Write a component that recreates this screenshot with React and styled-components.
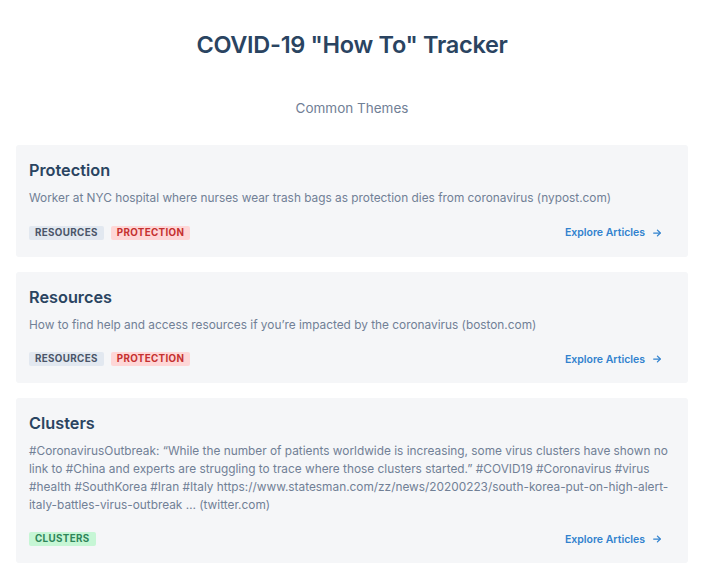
import React from 'react';
import styled, { createGlobalStyle } from 'styled-components';

const GlobalStyle = createGlobalStyle`
  body {
    margin: 0;
    background: #ffffff;
    font-family: Inter, "Noto Sans", "Liberation Sans", sans-serif;
    -webkit-font-smoothing: antialiased;
  }
`;

const Page = styled.div`
  width: 672px;
  margin: 0 auto;
  padding-top: 30px;
`;

const Heading = styled.h1`
  margin: 0;
  text-align: center;
  font-size: 23.5px;
  line-height: 29px;
  font-weight: 600;
  color: #2a4461;
  letter-spacing: -0.3px;
`;

const Subheading = styled.h2`
  margin: 0;
  padding-top: 40px;
  text-align: center;
  font-size: 13.5px;
  line-height: 18px;
  font-weight: 400;
  color: #718096;
`;

const List = styled.div`
  display: flex;
  flex-direction: column;
  gap: 15px;
  margin-top: 28px;
`;

const Card = styled.section`
  background: #f5f6f8;
  border-radius: 3px;
  padding: 13px 15px 17px 13px;
`;

const CardTitle = styled.h3`
  margin: 0;
  font-size: 16.3px;
  line-height: 24px;
  font-weight: 600;
  color: #2a4461;
`;

const CardBody = styled.p`
  margin: 8px 0 0;
  font-size: 11.85px;
  line-height: 17.7px;
  color: #718096;
`;

const Footer = styled.div`
  display: flex;
  align-items: center;
  justify-content: space-between;
  margin-top: 18px;
  padding-right: 11px;
`;

const Tags = styled.div`
  display: flex;
  gap: 7px;
`;

const tagColors = {
  gray: { bg: '#e2e8f0', fg: '#4a5568' },
  red: { bg: '#fed7d7', fg: '#c53030' },
  green: { bg: '#c6f6d5', fg: '#2f855a' },
};

const Tag = styled.span`
  display: inline-block;
  height: 14px;
  line-height: 14px;
  padding: 0 6px;
  border-radius: 2px;
  font-size: 9.8px;
  font-weight: 700;
  letter-spacing: 0.35px;
  text-transform: uppercase;
  background: ${p => tagColors[p.$color].bg};
  color: ${p => tagColors[p.$color].fg};
`;

const ExploreLink = styled.a`
  display: flex;
  align-items: center;
  gap: 7px;
  font-size: 10.5px;
  font-weight: 600;
  color: #3182ce;
  text-decoration: none;
  cursor: pointer;
`;

const Arrow = () => (
  <svg width="10" height="10" viewBox="0 0 24 24" fill="none" stroke="#3182ce" strokeWidth="3" strokeLinecap="round" strokeLinejoin="round">
    <path d="M4 12h15" />
    <path d="M13 5l7 7-7 7" />
  </svg>
);

const themes = [
  {
    title: 'Protection',
    body: 'Worker at NYC hospital where nurses wear trash bags as protection dies from coronavirus (nypost.com)',
    tags: [['Resources', 'gray'], ['Protection', 'red']],
  },
  {
    title: 'Resources',
    body: 'How to find help and access resources if you\u2019re impacted by the coronavirus (boston.com)',
    tags: [['Resources', 'gray'], ['Protection', 'red']],
  },
  {
    title: 'Clusters',
    body: '#CoronavirusOutbreak: \u201cWhile the number of patients worldwide is increasing, some virus clusters have shown no link to #China and experts are struggling to trace where those clusters started.\u201d #COVID19 #Coronavirus #virus #health #SouthKorea #Iran #Italy https://www.statesman.com/zz/news/20200223/south-korea-put-on-high-alert-italy-battles-virus-outbreak \u2026 (twitter.com)',
    tags: [['Clusters', 'green']],
  },
];

const App = () => (
  <>
    <GlobalStyle />
    <Page>
      <Heading>COVID-19 "How To" Tracker</Heading>
      <Subheading>Common Themes</Subheading>
      <List>
        {themes.map(theme => (
          <Card key={theme.title}>
            <CardTitle>{theme.title}</CardTitle>
            <CardBody>{theme.body}</CardBody>
            <Footer>
              <Tags>
                {theme.tags.map(([label, color]) => (
                  <Tag key={label} $color={color}>{label}</Tag>
                ))}
              </Tags>
              <ExploreLink>
                Explore Articles <Arrow />
              </ExploreLink>
            </Footer>
          </Card>
        ))}
      </List>
    </Page>
  </>
);

export default App;
